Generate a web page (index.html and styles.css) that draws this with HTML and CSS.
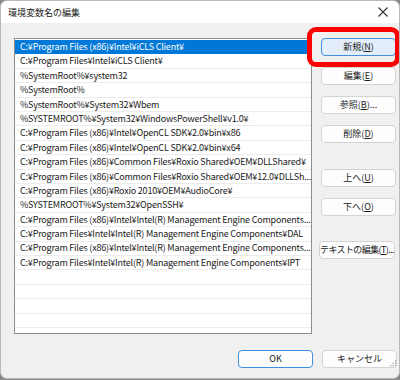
FILE: index.html
```html
<!DOCTYPE html>
<html lang="ja">
<head>
    <meta charset="UTF-8">
    <meta name="viewport" content="width=device-width, initial-scale=1.0">
    <title>環境変数名の編集</title>
    <link rel="stylesheet" href="styles.css">
</head>
<body>
    <div class="window">
        <div class="titlebar">
            <span class="title">環境変数名の編集</span>
            <svg class="close" width="10" height="10" viewBox="0 0 10 10">
                <path d="M0.5 0.5 L9.5 9.5 M9.5 0.5 L0.5 9.5" stroke="#333" stroke-width="1.1" fill="none"/>
            </svg>
        </div>

        <div class="body">
            <div class="main">
                <ul class="path-list">
                    <li class="selected">C:¥Program Files (x86)¥Intel¥iCLS Client¥</li>
                    <li>C:¥Program Files¥Intel¥iCLS Client¥</li>
                    <li>%SystemRoot%¥system32</li>
                    <li>%SystemRoot%</li>
                    <li>%SystemRoot%¥System32¥Wbem</li>
                    <li>%SYSTEMROOT%¥System32¥WindowsPowerShell¥v1.0¥</li>
                    <li>C:¥Program Files (x86)¥Intel¥OpenCL SDK¥2.0¥bin¥x86</li>
                    <li>C:¥Program Files (x86)¥Intel¥OpenCL SDK¥2.0¥bin¥x64</li>
                    <li>C:¥Program Files (x86)¥Common Files¥Roxio Shared¥OEM¥DLLShared¥</li>
                    <li>C:¥Program Files (x86)¥Common Files¥Roxio Shared¥OEM¥12.0¥DLLSh...</li>
                    <li>C:¥Program Files (x86)¥Roxio 2010¥OEM¥AudioCore¥</li>
                    <li>%SYSTEMROOT%¥System32¥OpenSSH¥</li>
                    <li>C:¥Program Files (x86)¥Intel¥Intel(R) Management Engine Components...</li>
                    <li>C:¥Program Files¥Intel¥Intel(R) Management Engine Components¥DAL</li>
                    <li>C:¥Program Files (x86)¥Intel¥Intel(R) Management Engine Components...</li>
                    <li>C:¥Program Files¥Intel¥Intel(R) Management Engine Components¥IPT</li>
                </ul>

                <div class="side-buttons">
                    <button class="btn btn-focus">新規(<u>N</u>)</button>
                    <button class="btn">編集(<u>E</u>)</button>
                    <button class="btn">参照(<u>B</u>)...</button>
                    <button class="btn">削除(<u>D</u>)</button>
                    <button class="btn group-start">上へ(<u>U</u>)</button>
                    <button class="btn">下へ(<u>O</u>)</button>
                    <button class="btn btn-wide group-last">テキストの編集(<u>T</u>)...</button>
                </div>
            </div>

            <div class="footer">
                <button class="btn btn-default">OK</button>
                <button class="btn">キャンセル</button>
            </div>

            <svg class="grip" width="7" height="7" viewBox="0 0 7 7">
                <rect x="5" y="0" width="1.2" height="1.2" fill="#999"/>
                <rect x="2.5" y="2.5" width="1.2" height="1.2" fill="#999"/>
                <rect x="5" y="2.5" width="1.2" height="1.2" fill="#999"/>
                <rect x="0" y="5" width="1.2" height="1.2" fill="#999"/>
                <rect x="2.5" y="5" width="1.2" height="1.2" fill="#999"/>
                <rect x="5" y="5" width="1.2" height="1.2" fill="#999"/>
            </svg>
        </div>

        <div class="highlight"></div>
    </div>
</body>
</html>
```

FILE: styles.css
```css
body {
    margin: 0;
    padding: 0;
    background-color: #8a8a8a;
    font-family: "Noto Sans CJK JP", "Noto Sans", sans-serif;
    font-size: 9px;
    color: #1a1a1a;
}
.window {
    position: relative;
    width: 398px;
    height: 377px;
    background-color: #f0f0f0;
    border: 1px solid #b9b9b9;
    border-radius: 7px;
    overflow: hidden;
}
.titlebar {
    height: 22px;
    background-color: #ffffff;
    display: flex;
    align-items: center;
    justify-content: space-between;
    padding: 0 7px 0 7px;
}
.title {
    font-size: 9px;
    color: #222;
}
.close {
    margin-right: 4px;
}
.body {
    position: relative;
    padding: 15px 0 0 13px;
}
.main {
    display: flex;
    gap: 9px;
}
.path-list {
    list-style-type: none;
    margin: 0;
    padding: 1px 0 0 0;
    width: 296px;
    height: 293px;
    border: 1px solid #8e8e8e;
    background-color: #fff;
    background-image: repeating-linear-gradient(to bottom, #fff 0, #fff 13.4px, #ececec 13.4px, #ececec 14.4px);
    background-position: 0 1px;
    overflow: hidden;
}
.path-list li {
    height: 14.4px;
    line-height: 14px;
    padding-left: 5px;
    white-space: nowrap;
    overflow: hidden;
    letter-spacing: -0.2px;
}
.path-list li.selected {
    background-color: #0078d7;
    color: #fff;
}
.side-buttons {
    display: flex;
    flex-direction: column;
    gap: 11px;
}
.btn {
    width: 75px;
    height: 18px;
    padding: 0;
    font-family: "Noto Sans CJK JP", "Noto Sans", sans-serif;
    font-size: 9px;
    line-height: 16px;
    color: #1a1a1a;
    background-color: #fdfdfd;
    border: 1px solid #d3d3d3;
    border-radius: 4px;
    white-space: nowrap;
}
.btn u {
    text-underline-offset: 1px;
}
.btn-focus {
    background-color: #e3eefa;
    border-color: #3d8fe0;
}
.btn-default {
    border-color: #3d8fe0;
}
.btn-wide {
    width: 76px;
    margin-left: -2px;
    letter-spacing: -0.6px;
    overflow: hidden;
}
.group-start {
    margin-top: 15px;
}
.group-last {
    margin-top: 14px;
}
.footer {
    display: flex;
    justify-content: flex-end;
    gap: 9px;
    padding: 16px 2px 0 0;
}
.grip {
    position: absolute;
    right: 2px;
    top: 337px;
}
.highlight {
    position: absolute;
    left: 306px;
    top: 26px;
    width: 83px;
    height: 30px;
    border: 5px solid #ff0000;
    border-radius: 9px;
}
```
